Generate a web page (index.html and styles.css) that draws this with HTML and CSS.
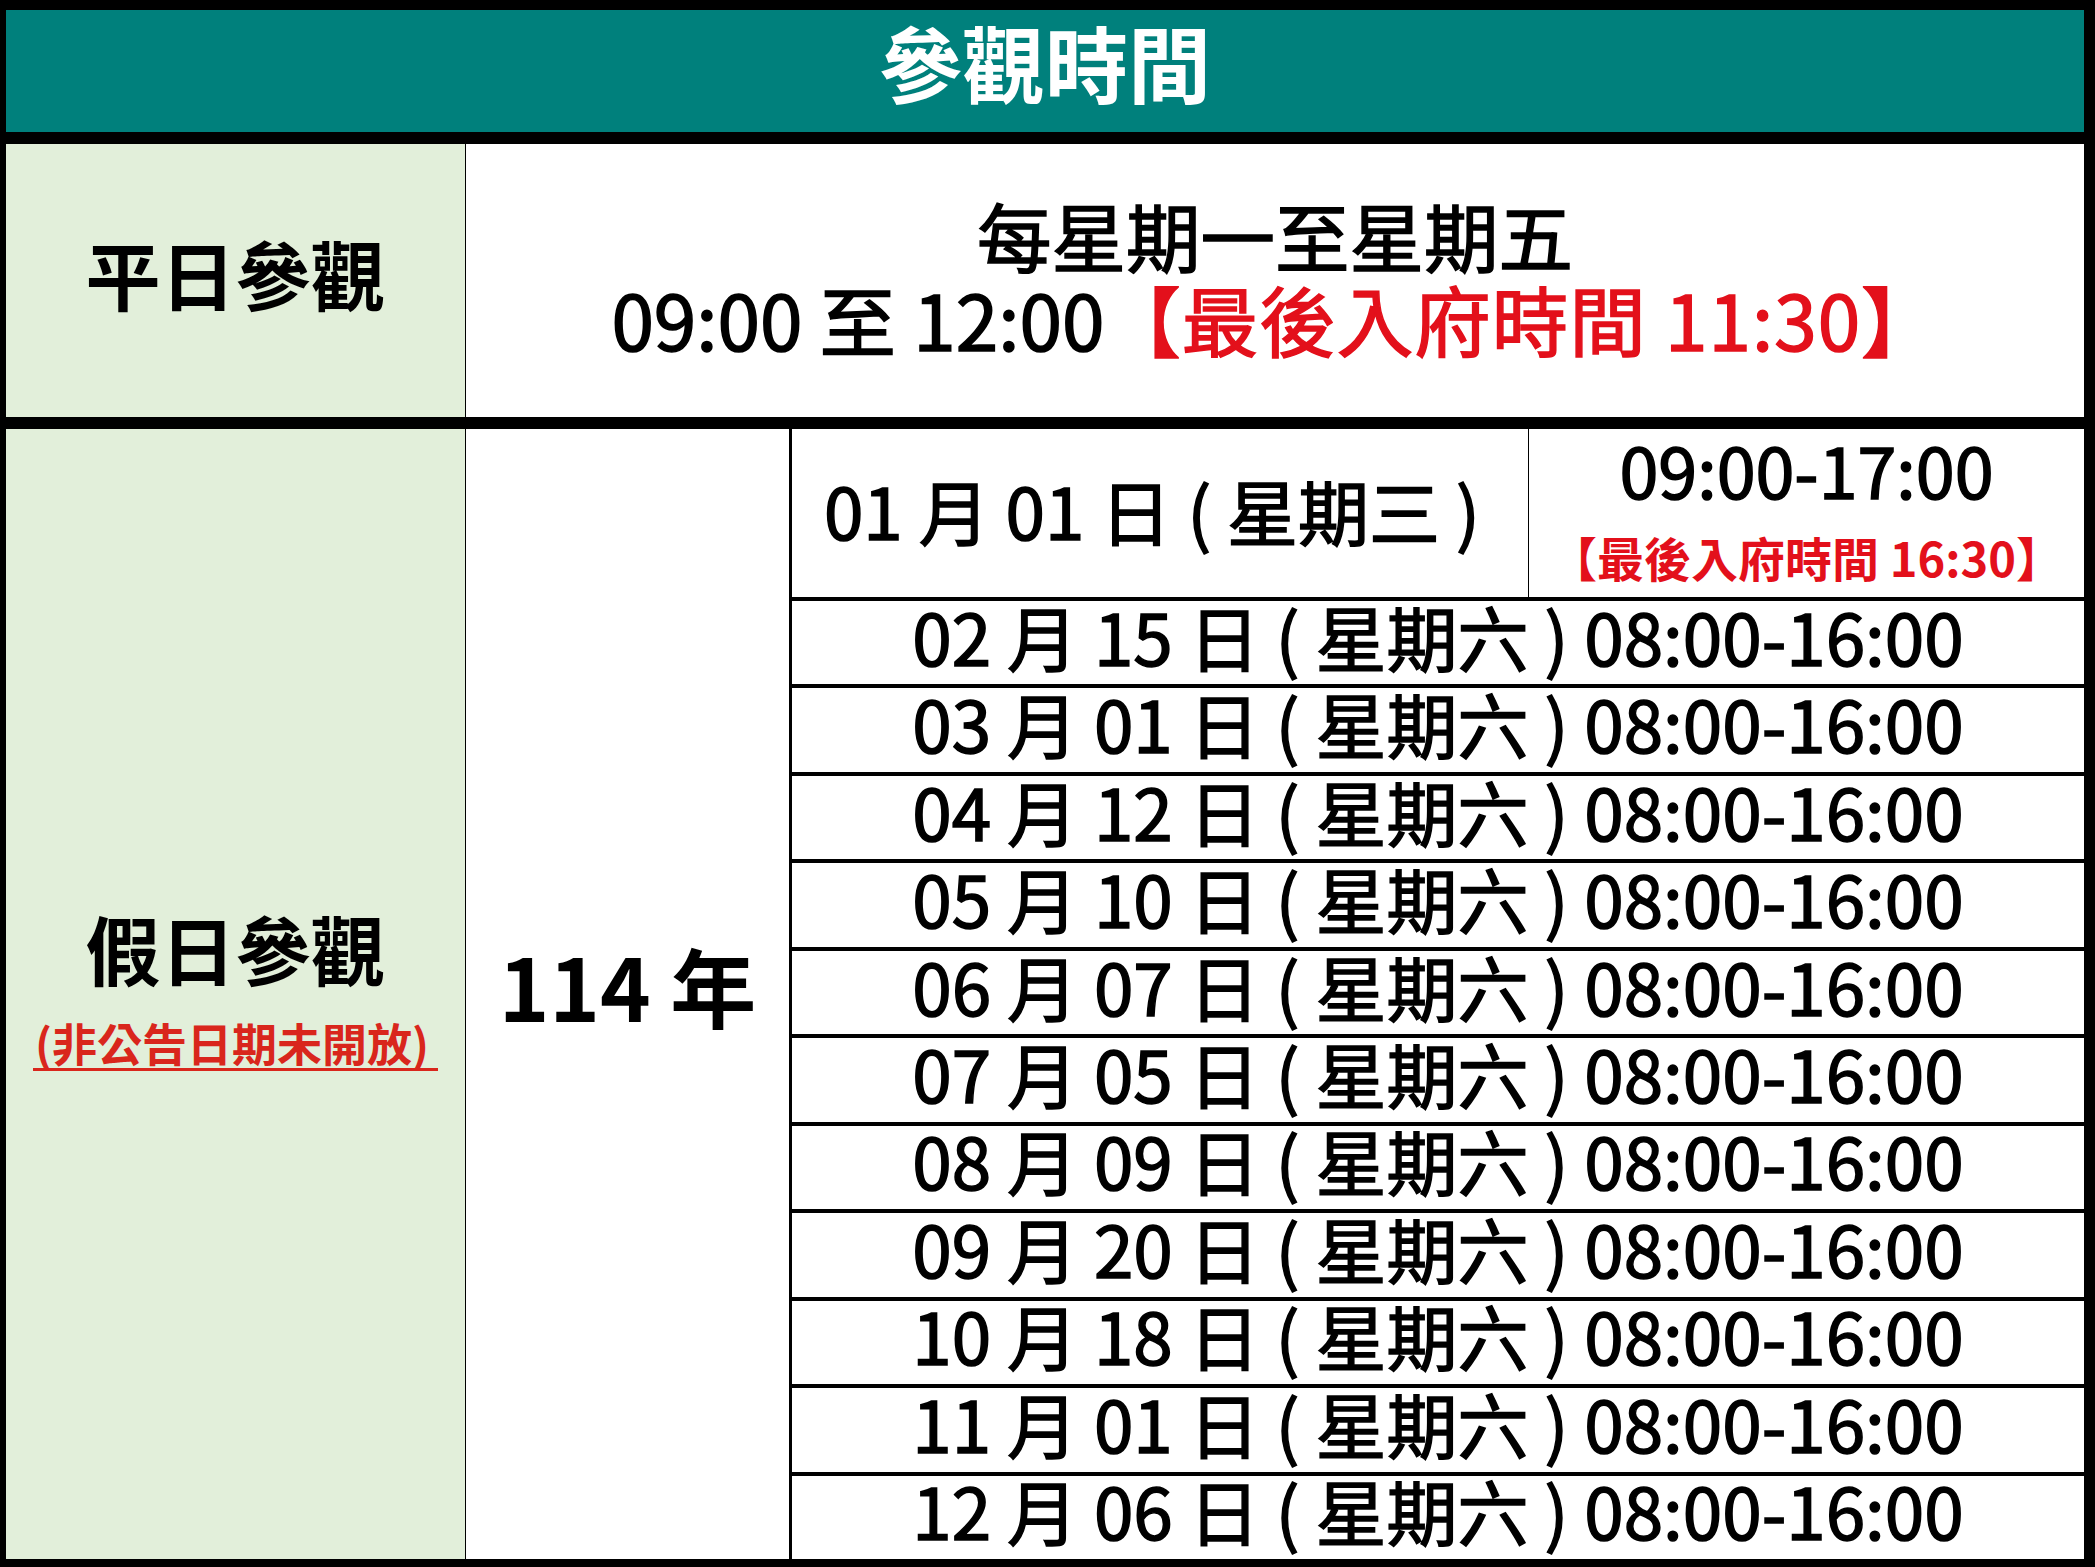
FILE: index.html
```html
<!DOCTYPE html>
<html lang="zh-Hant">
<head>
<meta charset="utf-8">
<title>參觀時間</title>
<link rel="stylesheet" href="styles.css">
</head>
<body>
<div class="board">
  <div class="title"><span class="title-text">參觀時間</span></div>

  <div class="weekday">
    <div class="label label-weekday"><span class="label-text">平日參觀</span></div>
    <div class="weekday-hours">
      <div class="wk-line wk-days">每星期一至星期五</div>
      <div class="wk-line wk-time">09:00 至 12:00<span class="red">【最後入府時間 11:30】</span></div>
    </div>
  </div>

  <div class="holiday">
    <div class="label label-holiday">
      <span class="label-text">假日參觀</span>
      <span class="note">(非公告日期未開放)</span>
    </div>
    <div class="year">114 年</div>
    <div class="dates">
      <div class="first">
        <div class="first-date">01 月 01 日 ( 星期三 )</div>
        <div class="first-time">
          <div class="time">09:00-17:00</div>
          <div class="last-entry">【最後入府時間 16:30】</div>
        </div>
      </div>
      <div class="date-row">02 月 15 日 ( 星期六 ) 08:00-16:00</div>
      <div class="date-row">03 月 01 日 ( 星期六 ) 08:00-16:00</div>
      <div class="date-row">04 月 12 日 ( 星期六 ) 08:00-16:00</div>
      <div class="date-row">05 月 10 日 ( 星期六 ) 08:00-16:00</div>
      <div class="date-row">06 月 07 日 ( 星期六 ) 08:00-16:00</div>
      <div class="date-row">07 月 05 日 ( 星期六 ) 08:00-16:00</div>
      <div class="date-row">08 月 09 日 ( 星期六 ) 08:00-16:00</div>
      <div class="date-row">09 月 20 日 ( 星期六 ) 08:00-16:00</div>
      <div class="date-row">10 月 18 日 ( 星期六 ) 08:00-16:00</div>
      <div class="date-row">11 月 01 日 ( 星期六 ) 08:00-16:00</div>
      <div class="date-row">12 月 06 日 ( 星期六 ) 08:00-16:00</div>
    </div>
  </div>
</div>
</body>
</html>
```

FILE: styles.css
```css
html, body {
  margin: 0;
  padding: 0;
  background: #000;
}

body {
  font-family: "Noto Sans CJK TC", "Noto Sans CJK SC", sans-serif;
  font-weight: 400;
  color: #000;
}

.board {
  width: 2095px;
  height: 1567px;
  box-sizing: border-box;
  padding: 10px 11px 8px 6px;
  background: #000;
  display: flex;
  flex-direction: column;
  gap: 12px;
}

.title {
  height: 122px;
  flex: none;
  background: #00807c;
  display: flex;
  align-items: center;
  justify-content: center;
}

.title-text {
  color: #fff;
  font-size: 83px;
  font-weight: 700;
  line-height: 1;
  padding-bottom: 20px;
}

.weekday {
  height: 273px;
  flex: none;
  display: flex;
  gap: 1px;
}

.label {
  width: 459px;
  flex: none;
  box-sizing: border-box;
  background: #e2efda;
  display: flex;
  flex-direction: column;
  align-items: center;
  justify-content: center;
}

.label-weekday {
  padding-bottom: 16px;
}

.label-holiday {
  padding-bottom: 14px;
}

.label-text {
  font-size: 75px;
  font-weight: 700;
  line-height: 88px;
}

.note {
  margin-top: 26px;
  font-size: 45px;
  font-weight: 700;
  line-height: 50px;
  color: #d9261c;
  border-bottom: 3px solid #d9261c;
  padding: 0 9px 0 2px;
}

.weekday-hours {
  flex: 1;
  background: #fff;
  display: flex;
  flex-direction: column;
  align-items: center;
  justify-content: center;
  padding-bottom: 10px;
  box-sizing: border-box;
}

.wk-line {
  white-space: nowrap;
  -webkit-text-stroke-width: 1.5px;
}

.wk-days {
  font-size: 74.5px;
  line-height: 84px;
}

.wk-time {
  font-size: 76.5px;
  line-height: 82px;
}

.red {
  color: #e3101b;
  letter-spacing: 1px;
}

.holiday {
  flex: 1;
  min-height: 0;
  display: flex;
}

.year {
  width: 323px;
  flex: none;
  box-sizing: border-box;
  margin-left: 1px;
  margin-right: 3px;
  padding-bottom: 18px;
  background: #fff;
  display: flex;
  align-items: center;
  justify-content: center;
  font-size: 86px;
  font-weight: 700;
  line-height: 1;
}

.dates {
  flex: 1;
  min-height: 0;
  display: flex;
  flex-direction: column;
  gap: 4px;
}

.first {
  height: 168px;
  flex: none;
  display: flex;
  gap: 1px;
}

.first-date {
  width: 736px;
  flex: none;
  box-sizing: border-box;
  padding: 0 16px 8px 0;
  background: #fff;
  display: flex;
  align-items: center;
  justify-content: center;
  font-size: 71px;
  line-height: 1;
  white-space: nowrap;
  -webkit-text-stroke-width: 1.5px;
}

.first-time {
  flex: 1;
  background: #fff;
  display: flex;
  flex-direction: column;
  align-items: center;
  justify-content: flex-start;
  gap: 22px;
}

.time {
  font-size: 70px;
  line-height: 80px;
  -webkit-text-stroke-width: 1.5px;
}

.last-entry {
  font-size: 47px;
  font-weight: 700;
  line-height: 52px;
  color: #e3101b;
  white-space: nowrap;
}

.date-row {
  flex: 1 1 0;
  min-height: 0;
  box-sizing: border-box;
  padding-bottom: 16px;
  background: #fff;
  display: flex;
  align-items: center;
  justify-content: center;
  font-size: 71px;
  line-height: 60px;
  white-space: nowrap;
  -webkit-text-stroke-width: 1.5px;
}
```
